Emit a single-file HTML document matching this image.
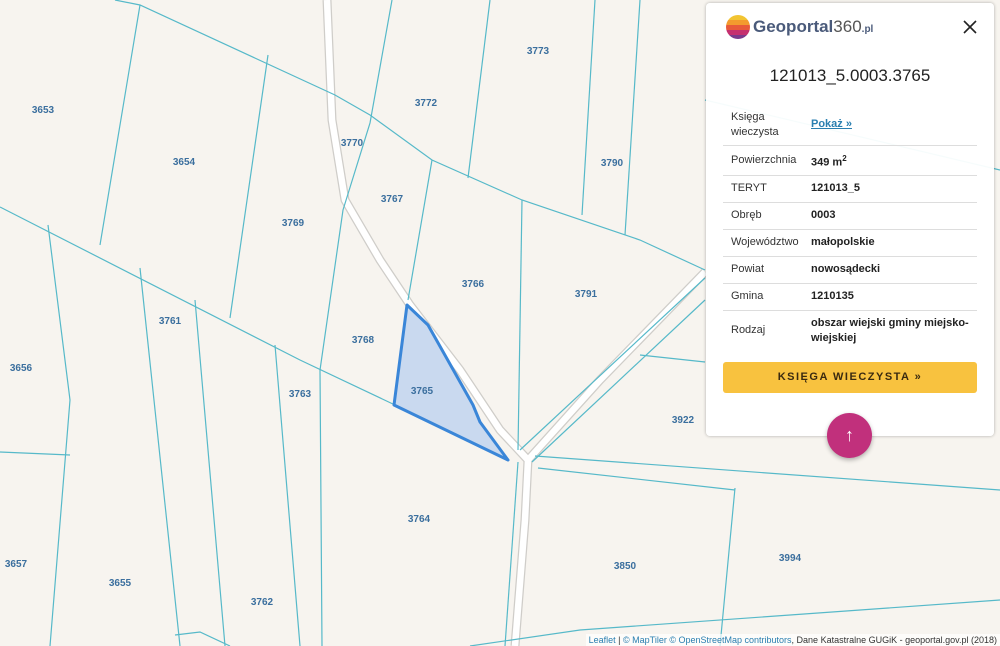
<!DOCTYPE html>
<html><head><meta charset="utf-8"><style>
body{margin:0;width:1000px;height:646px;overflow:hidden;background:#f7f4ef;font-family:"Liberation Sans",sans-serif;position:relative}
svg{position:absolute;left:0;top:0}
.lb{font:bold 10px "Liberation Sans",sans-serif;fill:#3b6f9e}
.panel{position:absolute;left:706px;top:3px;width:288px;height:433px;background:rgba(255,255,255,0.95);border-radius:4px;box-shadow:0 0 3px rgba(0,0,0,0.3)}
.row{position:absolute;left:17px;width:254px;border-bottom:1px solid #ddd;font-size:11px;color:#333}
.row .k{position:absolute;left:8px}
.row .v{position:absolute;left:88px;font-weight:bold;color:#222}
.btn{position:absolute;left:17px;top:359px;width:254px;height:31px;background:#f8c23f;border-radius:3px;text-align:center;line-height:31px;font-weight:bold;font-size:11px;letter-spacing:1.5px;color:#3a2a10}
.fab{position:absolute;left:827px;top:413px;width:45px;height:45px;border-radius:50%;background:#c1307c;box-shadow:0 2px 5px rgba(0,0,0,0.3);color:#fff;text-align:center;line-height:45px;font-size:18px}
.attr{position:absolute;right:0;bottom:0;background:rgba(255,255,255,0.7);font-size:9px;color:#333;padding:1px 3px}
.attr a{color:#2a7fb0;text-decoration:none}
</style></head><body>
<svg width="1000" height="646" viewBox="0 0 1000 646">
<g fill="none" stroke="#cfcdc9" stroke-width="9" stroke-linejoin="round">
<path d="M327 0 L332 120 L345 200 L380 260 L410 305 L460 370 L500 430 L528 460 L525 520 L515 646"/>
<path d="M528 460 L600 380 L705 272"/>
</g>
<g fill="none" stroke="#ffffff" stroke-width="6.5" stroke-linejoin="round">
<path d="M327 0 L332 120 L345 200 L380 260 L410 305 L460 370 L500 430 L528 460 L525 520 L515 646"/>
<path d="M528 460 L600 380 L705 272"/>
</g>
<g fill="none" stroke="#56b9c9" stroke-width="1.2">
<path d="M115 0 L140 5 L335 95 L370 115 L432 160 L522 200 L640 240 L705 270"/>
<path d="M0 207 L300 360 L395 405"/>
<path d="M140 5 L100 245"/>
<path d="M268 55 L230 318"/>
<path d="M392 0 L370 123 L343 210 L320 370 L322 646"/>
<path d="M432 160 L408 300"/>
<path d="M522 200 L518 450"/>
<path d="M490 0 L468 178"/>
<path d="M595 0 L582 215"/>
<path d="M640 0 L625 235"/>
<path d="M48 225 L70 400 L50 646"/>
<path d="M140 268 L180 646"/>
<path d="M195 300 L225 646"/>
<path d="M275 345 L300 646"/>
<path d="M0 452 L70 455"/>
<path d="M175 635 L200 632 L230 646"/>
<path d="M520 450 L705 278"/>
<path d="M532 462 L705 300"/>
<path d="M640 355 L705 362"/>
<path d="M535 456 L1000 490"/>
<path d="M538 468 L735 490"/>
<path d="M735 488 L720 646"/>
<path d="M470 646 L580 630 L1000 600"/>
<path d="M518 462 L505 646"/>
<path d="M705 100 L1000 170"/>
</g>
<path d="M407 305 L428 325 L473 405 L480 422 L508 460 L394 405 Z" fill="#c9d9ef" stroke="#3a86d8" stroke-width="3" stroke-linejoin="round"/>
<g class="lb" text-anchor="middle">
<text x="43" y="113">3653</text><text x="184" y="165">3654</text><text x="293" y="226">3769</text>
<text x="352" y="146">3770</text><text x="426" y="106">3772</text><text x="538" y="54">3773</text>
<text x="612" y="166">3790</text><text x="392" y="202">3767</text><text x="473" y="287">3766</text>
<text x="586" y="297">3791</text><text x="170" y="324">3761</text><text x="363" y="343">3768</text>
<text x="21" y="371">3656</text><text x="300" y="397">3763</text><text x="422" y="394">3765</text>
<text x="683" y="423">3922</text><text x="419" y="522">3764</text><text x="16" y="567">3657</text>
<text x="120" y="586">3655</text><text x="262" y="605">3762</text><text x="625" y="569">3850</text>
<text x="790" y="561">3994</text>
</g>
</svg>
<div class="panel">
<svg width="26" height="26" style="left:19px;top:11px" viewBox="0 0 26 26">
<defs><clipPath id="c"><circle cx="13" cy="13" r="12"/></clipPath></defs>
<g clip-path="url(#c)">
<rect x="0" y="0" width="26" height="6" fill="#f2c432"/>
<rect x="0" y="6" width="26" height="5" fill="#f39b2e"/>
<rect x="0" y="11" width="26" height="5" fill="#e85a3a"/>
<rect x="0" y="16" width="26" height="5" fill="#c5306f"/>
<rect x="0" y="21" width="26" height="5" fill="#7a3a8c"/>
</g>
</svg>
<div style="position:absolute;left:47px;top:14px;font-size:17px;font-weight:bold;color:#4a5a7a">Geoportal<span style="font-weight:normal;color:#555">360</span><span style="font-size:10px">.pl</span></div>
<svg width="14" height="14" style="left:257px;top:17px" viewBox="0 0 14 14"><path d="M1 1L13 13M13 1L1 13" stroke="#222" stroke-width="1.6"/></svg>
<div style="position:absolute;left:0;width:288px;top:63px;text-align:center;font-size:17px;color:#222">121013_5.0003.3765</div>
<div class="row" style="top:104px;height:38px"><span class="k" style="top:3px;line-height:15px">Księga<br>wieczysta</span><span class="v" style="top:11px;color:#2a7fb0;text-decoration:underline">Pokaż »</span></div>
<div class="row" style="top:142px;height:30px"><span class="k" style="top:9px">Powierzchnia</span><span class="v" style="top:9px">349 m<sup style="font-size:8px">2</sup></span></div>
<div class="row" style="top:172px;height:27px"><span class="k" style="top:7px">TERYT</span><span class="v" style="top:7px">121013_5</span></div>
<div class="row" style="top:199px;height:27px"><span class="k" style="top:7px">Obręb</span><span class="v" style="top:7px">0003</span></div>
<div class="row" style="top:226px;height:27px"><span class="k" style="top:7px">Województwo</span><span class="v" style="top:7px">małopolskie</span></div>
<div class="row" style="top:253px;height:27px"><span class="k" style="top:7px">Powiat</span><span class="v" style="top:7px">nowosądecki</span></div>
<div class="row" style="top:280px;height:27px"><span class="k" style="top:7px">Gmina</span><span class="v" style="top:7px">1210135</span></div>
<div class="row" style="top:307px;height:40px;border:none"><span class="k" style="top:14px">Rodzaj</span><span class="v" style="top:6px;line-height:15px">obszar wiejski gminy miejsko-<br>wiejskiej</span></div>
<div class="btn">KSIĘGA WIECZYSTA »</div>
</div>
<div class="fab">↑</div>
<div class="attr"><a>Leaflet</a> | <a>© MapTiler</a> <a>© OpenStreetMap contributors</a>, Dane Katastralne GUGiK - geoportal.gov.pl (2018)</div>
</body></html>
